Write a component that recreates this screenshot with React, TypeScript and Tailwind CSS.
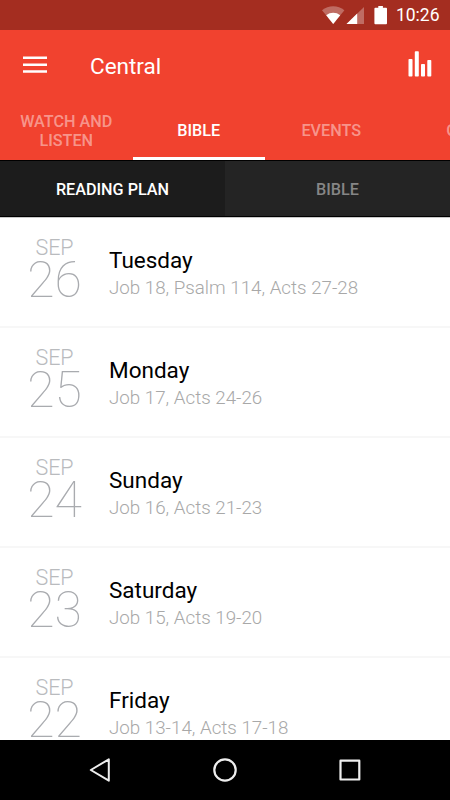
const tabs = ["Watch and Listen", "Bible", "Events", "Give"]

const readings = [
  { month: "SEP", date: 26, day: "Tuesday", passages: "Job 18, Psalm 114, Acts 27-28" },
  { month: "SEP", date: 25, day: "Monday", passages: "Job 17, Acts 24-26" },
  { month: "SEP", date: 24, day: "Sunday", passages: "Job 16, Acts 21-23" },
  { month: "SEP", date: 23, day: "Saturday", passages: "Job 15, Acts 19-20" },
  { month: "SEP", date: 22, day: "Friday", passages: "Job 13-14, Acts 17-18" },
]

export default function App() {
  return (
    <main className="flex h-[800px] w-[450px] flex-col overflow-hidden bg-white font-['Roboto',sans-serif]">
      <StatusBar />
      <Header />
      <PlanSwitch />
      <ul className="min-h-0 flex-1 overflow-hidden border-t border-[#c9c9c9]">
        {readings.map((item) => (
          <ReadingRow key={item.date} {...item} />
        ))}
      </ul>
      <NavigationBar />
    </main>
  )
}

function StatusBar() {
  return (
    <div className="flex h-[30px] shrink-0 items-center justify-end bg-[#a42d20] pr-[10.5px] text-white">
      <svg viewBox="0 0 66 20" className="mr-[8px] h-5 w-[66px]" fill="currentColor">
        <path d="M0 5.2C6.5-.1 15.9-.1 22.4 5.2L11.2 19Z" opacity="0.3" />
        <path d="M4.2 10.3c4.1-3.3 9.9-3.3 14 0L11.2 19Z" />
        <path d="M24.5 19L42 2V19Z" opacity="0.3" />
        <path d="M24.5 19L35.2 8.6V19Z" />
        <path d="M56.3 1h4.6v1.8h3.2c.6 0 .9.3.9.9v14.6c0 .6-.3.9-.9.9H53.3c-.6 0-.9-.3-.9-.9V3.7c0-.6.3-.9.9-.9h3Z" />
      </svg>
      <span className="pt-0.5 text-[17.5px] leading-none">10:26</span>
    </div>
  )
}

function Header() {
  return (
    <header className="flex h-[130px] shrink-0 flex-col bg-[#f1422f]">
      <div className="flex h-[70px] items-center pl-[23px] pr-[18px] text-white">
        <button type="button" aria-label="Menu">
          <svg viewBox="0 0 24 18" className="h-[18px] w-6" fill="none" stroke="currentColor" strokeWidth="2.5">
            <path d="M0 1.8H24M0 8.7H24M0 15.6H24" />
          </svg>
        </button>
        <h1 className="ml-[43px] flex-1 pt-0.5 text-[22.5px] leading-none">Central</h1>
        <svg viewBox="0 0 24 26" className="mb-0.5 h-[26px] w-6" fill="currentColor">
          <rect x="0.5" y="8" width="4" height="17.5" rx="0.8" />
          <rect x="6.8" y="0.2" width="4" height="25.3" rx="0.8" />
          <rect x="13" y="13" width="4" height="12.5" rx="0.8" />
          <rect x="19.3" y="9" width="4" height="16.5" rx="0.8" />
        </svg>
      </div>
      <nav className="flex h-[60px] overflow-hidden">
        {tabs.map((tab) => (
          <button
            key={tab}
            type="button"
            className={`flex w-[132.5px] shrink-0 items-center justify-center border-b-[3px] px-4 pt-1 text-center text-[16.2px] font-medium uppercase leading-[19px] ${
              tab === "Bible" ? "border-white text-white" : "border-transparent text-white/45"
            }`}
          >
            {tab}
          </button>
        ))}
      </nav>
    </header>
  )
}

function PlanSwitch() {
  return (
    <div className="flex h-[57px] shrink-0 border-b border-t border-black text-[16.2px] font-medium">
      <button type="button" className="flex-1 bg-[#1c1c1c] pt-[3px] text-white">
        READING PLAN
      </button>
      <button type="button" className="flex-1 bg-[#242424] pt-[3px] text-[#868686]">
        BIBLE
      </button>
    </div>
  )
}

function ReadingRow({
  month,
  date,
  day,
  passages,
}: {
  month: string
  date: number
  day: string
  passages: string
}) {
  return (
    <li className="flex h-[110px] border-b-2 border-[#f7f7f7]">
      <div className="w-[109px] text-center text-[#a9abaf]">
        <p className="mt-[19px] text-[21.5px] font-light leading-[22px] text-[#b9bbbe]">{month}</p>
        <p className="text-[50px] font-thin leading-[43px]">{date}</p>
      </div>
      <div className="pt-[28px]">
        <h2 className="text-[22.5px] leading-[28px] text-black">{day}</h2>
        <p className="text-[18.75px] font-light leading-[28px] text-[#a8a8a8]">{passages}</p>
      </div>
    </li>
  )
}

function NavigationBar() {
  return (
    <div className="flex h-[60px] shrink-0 items-center justify-center gap-[99px] bg-black text-[#eeeeee]">
      <svg viewBox="0 0 26 26" className="size-[26px]" fill="none" stroke="currentColor" strokeWidth="2" strokeLinejoin="round">
        <path d="M21.8 2.3V23.7L3.8 13Z" />
      </svg>
      <svg viewBox="0 0 26 26" className="size-[26px]" fill="none" stroke="currentColor" strokeWidth="2.2">
        <circle cx="13" cy="13" r="10.7" />
      </svg>
      <svg viewBox="0 0 26 26" className="size-[26px]" fill="none" stroke="currentColor" strokeWidth="2.2" strokeLinejoin="round">
        <rect x="3.5" y="3.7" width="18.8" height="18.8" />
      </svg>
    </div>
  )
}
